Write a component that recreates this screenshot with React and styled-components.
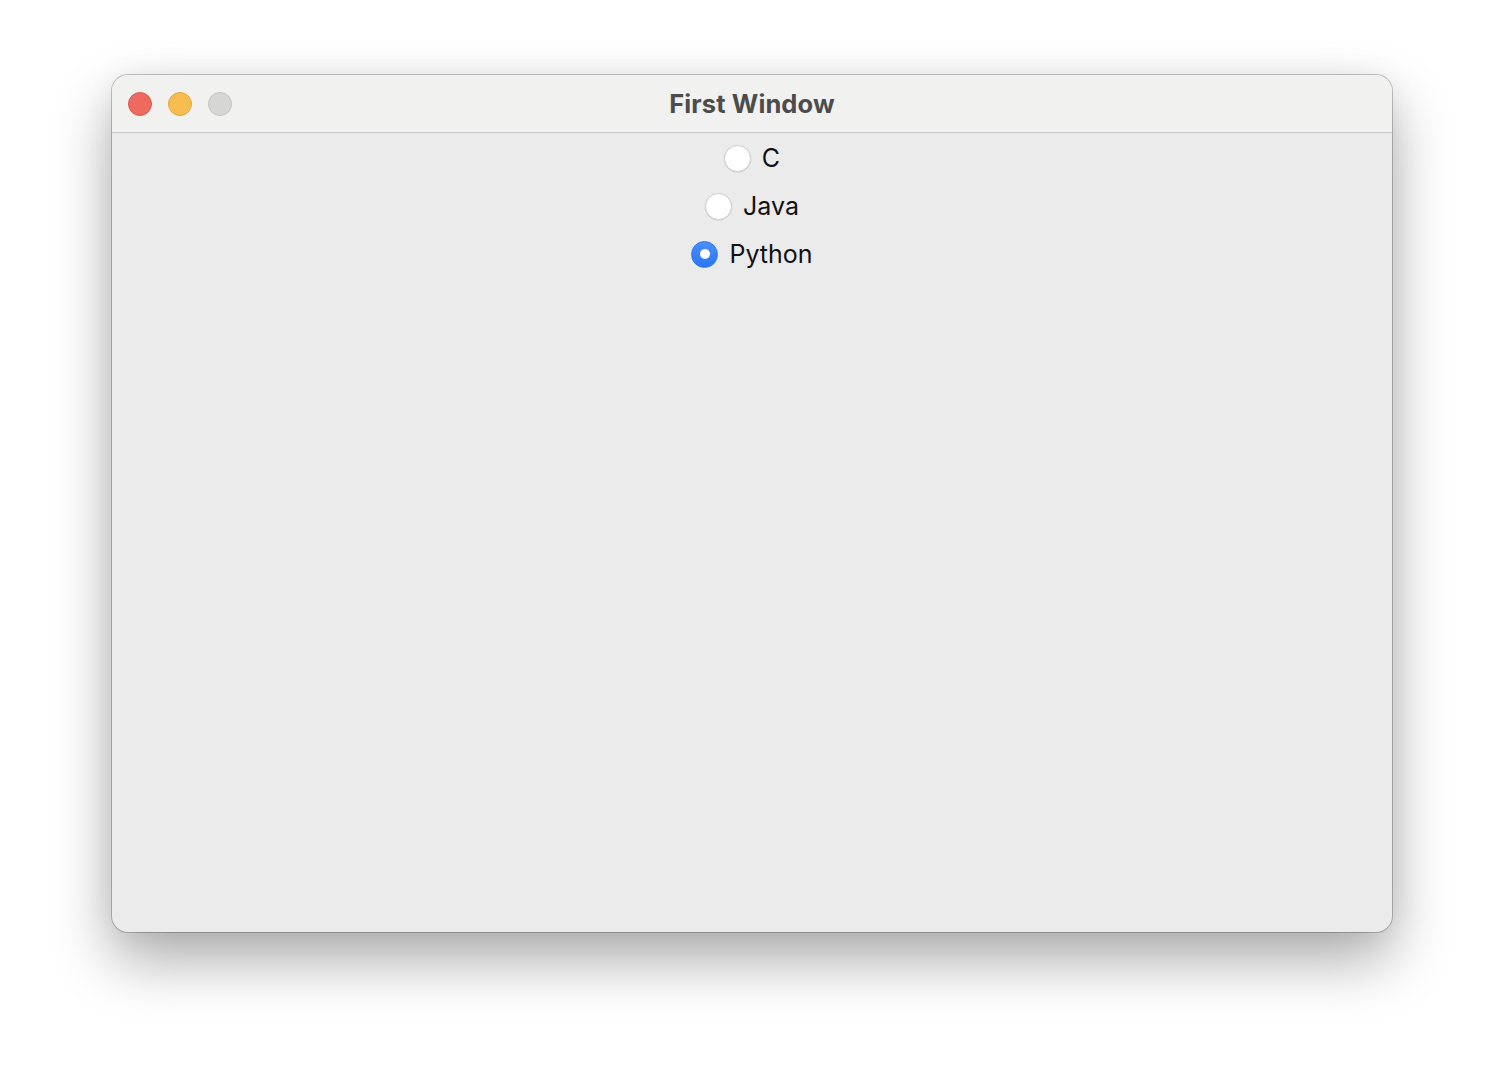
import React from "react";
import styled, { createGlobalStyle } from "styled-components";

const Global = createGlobalStyle`
  html, body { margin: 0; padding: 0; background: #ffffff; }
  body { font-family: Inter, "Noto Sans", "Liberation Sans", sans-serif; }
`;

const Page = styled.div`
  width: 1504px;
  height: 1080px;
  padding: 75px 0 0 112px;
  box-sizing: border-box;
`;

const Window = styled.div`
  width: 1280px;
  height: 857px;
  border-radius: 16px;
  background: #ebebeb;
  box-shadow: 0 0 0 1px rgba(0, 0, 0, 0.22), 0 28px 60px rgba(0, 0, 0, 0.33), 0 0 30px rgba(0,0,0,0.06);
  display: flex;
  flex-direction: column;
  overflow: hidden;
`;

const TitleBar = styled.div`
  height: 57px;
  flex: none;
  background: #f1f1f0;
  border-bottom: 1px solid #c9c9c9;
  display: grid;
  grid-template-columns: 1fr auto 1fr;
  align-items: center;
  padding: 0 16px;
`;

const Lights = styled.div`
  display: flex;
  gap: 16px;
`;

const Light = styled.span`
  width: 24px;
  height: 24px;
  box-sizing: border-box;
  border-radius: 50%;
  background: ${(p) => p.$bg};
  border: 1px solid ${(p) => p.$border};
`;

const Title = styled.div`
  font-size: 25.5px;
  font-weight: 700;
  color: #4c4c4c;
  letter-spacing: 0.1px;
`;

const Body = styled.div`
  flex: 1;
  display: flex;
  flex-direction: column;
  align-items: center;
  padding-top: 1px;
`;

const Row = styled.label`
  height: 48px;
  display: flex;
  align-items: center;
  gap: 11px;
  font-size: 25px;
  color: #111;
`;

const Radio = styled.span`
  width: 27px;
  height: 27px;
  box-sizing: border-box;
  border-radius: 50%;
  display: flex;
  align-items: center;
  justify-content: center;
  background: ${(p) => (p.$checked ? "linear-gradient(#4a8ff9, #2a76f3)" : "#ffffff")};
  border: 1px solid ${(p) => (p.$checked ? "#2f78f0" : "#cfcfcf")};
  box-shadow: ${(p) => (p.$checked ? "none" : "0 0.5px 1px rgba(0,0,0,0.12)")};
  &::after {
    content: "";
    display: ${(p) => (p.$checked ? "block" : "none")};
    width: 10px;
    height: 10px;
    border-radius: 50%;
    background: #ffffff;
  }
`;

const options = [
  { label: "C", checked: false },
  { label: "Java", checked: false },
  { label: "Python", checked: true },
];

export default function App() {
  return (
    <>
      <Global />
      <Page>
        <Window>
          <TitleBar>
            <Lights>
              <Light $bg="#ee6a5f" $border="#d95a50" />
              <Light $bg="#f6be50" $border="#dea73f" />
              <Light $bg="#d6d6d5" $border="#c2c2c1" />
            </Lights>
            <Title>First Window</Title>
            <div />
          </TitleBar>
          <Body>
            {options.map((o) => (
              <Row key={o.label}>
                <Radio $checked={o.checked} />
                {o.label}
              </Row>
            ))}
          </Body>
        </Window>
      </Page>
    </>
  );
}
